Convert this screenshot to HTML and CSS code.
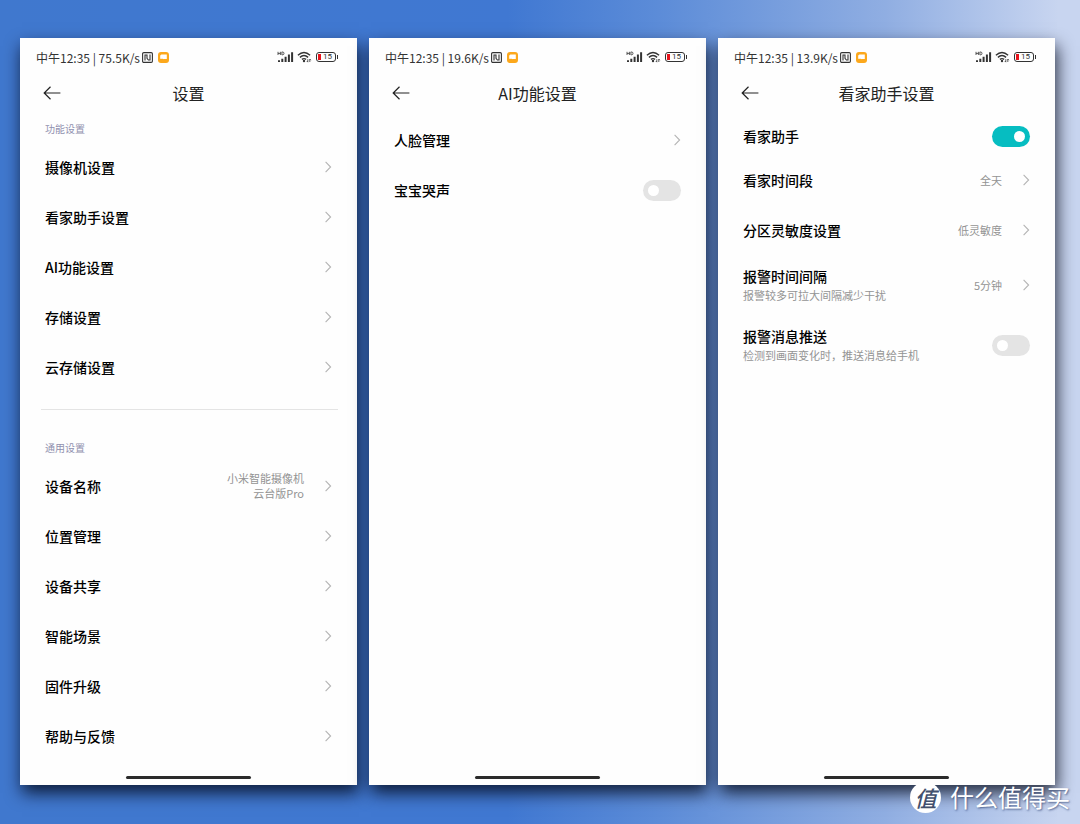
FILE: index.html
```html
<!DOCTYPE html>
<html lang="zh-CN">
<head>
<meta charset="utf-8">
<meta name="viewport" content="width=device-width, initial-scale=1">
<title>摄像机设置</title>
<link rel="stylesheet" href="styles.css">
</head>
<body>
<svg class="sprite" aria-hidden="true">
  <symbol id="chevron" viewBox="0 0 7 12"><path d="M.6.8 5.6 6 .6 11.2" fill="none" stroke="#b4b4b4" stroke-width="1.1"/></symbol>
  <symbol id="arrow" viewBox="0 0 18 14"><path d="M7.5.8 1.2 7l6.3 6.2M1.2 7H17.4" fill="none" stroke="#222" stroke-width="1.2"/></symbol>
  <symbol id="nfc" viewBox="0 0 11 11"><rect x=".6" y=".6" width="9.8" height="9.8" rx="1.2" fill="none" stroke="#333" stroke-width="1.1"/><path d="M3 8.6V3H5V6.4L6.4 8H8V2.4" fill="none" stroke="#333" stroke-width="1.1"/></symbol>
  <symbol id="app" viewBox="0 0 11 11"><rect width="11" height="11" rx="3" fill="#fca81c"/><path d="M3.4 2.4H8.8V7H5.4L3.8 8.6H2.2V3.6Z" fill="#fff"/><path d="M2 9V6.8H5V9Z" fill="#fca81c"/></symbol>
  <symbol id="signal" viewBox="0 0 17 12"><path d="M1 .8V4M3.4.8V4M1 2.4H3.4M4.9.9V3.9M4.9 1H5.6Q7 1 7 2.4T5.6 3.8H4.9" fill="none" stroke="#333" stroke-width=".8"/><path d="M1 9.2H3V11H1ZM4.3 7.8H6.3V11H4.3ZM7.6 5.8H9.6V11H7.6ZM10.9 3.4H12.9V11H10.9ZM14.1 1.2H16.1V11H14.1Z" fill="#333"/></symbol>
  <symbol id="wifi" viewBox="0 0 15 12"><path d="M.9 4.2Q7 -1.4 13.1 4.2M2.9 6.4Q7 2.8 11.1 6.4M4.9 8.4Q7 6.8 9.1 8.4" fill="none" stroke="#333" stroke-width="1.4"/><circle cx="7" cy="10" r="1.2" fill="#333"/><path d="M10.8 8.2V11M9.8 10 10.8 11.2M12.8 11V8M13.8 9.2 12.8 8" fill="none" stroke="#333" stroke-width=".8"/></symbol>
</svg>

<main class="board">
  <section class="phone">
    <div class="status">
      <span>中午12:35 | 75.5K/s</span>
      <svg class="nfc"><use href="#nfc"/></svg><svg class="app"><use href="#app"/></svg>
      <svg class="signal"><use href="#signal"/></svg><svg class="wifi"><use href="#wifi"/></svg><span class="battery">15</span>
    </div>
    <header class="bar">
      <button class="back" type="button" aria-label="返回"><svg><use href="#arrow"/></svg></button>
      <h1>设置</h1>
    </header>
    <h2 class="group">功能设置</h2>
    <nav class="list">
      <a class="row" href="#camera"><span class="label">摄像机设置</span><svg class="chevron"><use href="#chevron"/></svg></a>
      <a class="row" href="#guard"><span class="label">看家助手设置</span><svg class="chevron"><use href="#chevron"/></svg></a>
      <a class="row" href="#ai"><span class="label">AI功能设置</span><svg class="chevron"><use href="#chevron"/></svg></a>
      <a class="row" href="#storage"><span class="label">存储设置</span><svg class="chevron"><use href="#chevron"/></svg></a>
      <a class="row" href="#cloud"><span class="label">云存储设置</span><svg class="chevron"><use href="#chevron"/></svg></a>
    </nav>
    <hr class="divider">
    <h2 class="group">通用设置</h2>
    <nav class="list">
      <a class="row" href="#name"><span class="label">设备名称</span><span class="value">小米智能摄像机<br>云台版Pro</span><svg class="chevron"><use href="#chevron"/></svg></a>
      <a class="row" href="#place"><span class="label">位置管理</span><svg class="chevron"><use href="#chevron"/></svg></a>
      <a class="row" href="#share"><span class="label">设备共享</span><svg class="chevron"><use href="#chevron"/></svg></a>
      <a class="row" href="#scene"><span class="label">智能场景</span><svg class="chevron"><use href="#chevron"/></svg></a>
      <a class="row" href="#firmware"><span class="label">固件升级</span><svg class="chevron"><use href="#chevron"/></svg></a>
      <a class="row" href="#help"><span class="label">帮助与反馈</span><svg class="chevron"><use href="#chevron"/></svg></a>
    </nav>
    <div class="home"></div>
  </section>

  <section class="phone" id="ai">
    <div class="status">
      <span>中午12:35 | 19.6K/s</span>
      <svg class="nfc"><use href="#nfc"/></svg><svg class="app"><use href="#app"/></svg>
      <svg class="signal"><use href="#signal"/></svg><svg class="wifi"><use href="#wifi"/></svg><span class="battery">15</span>
    </div>
    <header class="bar">
      <button class="back" type="button" aria-label="返回"><svg><use href="#arrow"/></svg></button>
      <h1>AI功能设置</h1>
    </header>
    <div class="list list-ai">
      <a class="row" href="#faces"><span class="label">人脸管理</span><svg class="chevron"><use href="#chevron"/></svg></a>
      <div class="row"><label class="label" for="cry">宝宝哭声</label><input class="switch" id="cry" type="checkbox" role="switch"></div>
    </div>
    <div class="home"></div>
  </section>

  <section class="phone" id="guard">
    <div class="status">
      <span>中午12:35 | 13.9K/s</span>
      <svg class="nfc"><use href="#nfc"/></svg><svg class="app"><use href="#app"/></svg>
      <svg class="signal"><use href="#signal"/></svg><svg class="wifi"><use href="#wifi"/></svg><span class="battery">15</span>
    </div>
    <header class="bar">
      <button class="back" type="button" aria-label="返回"><svg><use href="#arrow"/></svg></button>
      <h1>看家助手设置</h1>
    </header>
    <div class="list list-guard">
      <div class="row row-short"><label class="label" for="assist">看家助手</label><input class="switch" id="assist" type="checkbox" role="switch" checked></div>
      <a class="row" href="#period"><span class="label">看家时间段</span><span class="value">全天</span><svg class="chevron"><use href="#chevron"/></svg></a>
      <a class="row" href="#zones"><span class="label">分区灵敏度设置</span><span class="value">低灵敏度</span><svg class="chevron"><use href="#chevron"/></svg></a>
      <a class="row row-tall" href="#interval"><span class="label">报警时间间隔<small>报警较多可拉大间隔减少干扰</small></span><span class="value">5分钟</span><svg class="chevron"><use href="#chevron"/></svg></a>
      <div class="row row-tall"><label class="label" for="push">报警消息推送<small>检测到画面变化时，推送消息给手机</small></label><input class="switch" id="push" type="checkbox" role="switch"></div>
    </div>
    <div class="home"></div>
  </section>
</main>

<div class="watermark"><span class="seal">值</span><span>什么值得买</span></div>
</body>
</html>
```
FILE: styles.css
```css
* { box-sizing: border-box; }

body {
  margin: 0;
  min-height: 100vh;
  display: flex;
  color: #000;
  font-family: "Noto Sans CJK SC", sans-serif;
  background: linear-gradient(90deg, #4078ce 0%, #4078d2 47%, #5c8cd8 61%, #90aee2 82%, #c8d5f0 98%);
}

.sprite { position: absolute; width: 0; height: 0; }

.board {
  flex: 1;
  display: grid;
  grid-template-columns: repeat(3, 1fr);
  gap: 12px;
  padding: 38px 25px 39px 20px;
}

.phone {
  display: flex;
  flex-direction: column;
  background: #fefefe;
  box-shadow: 2px 8px 16px rgba(0, 5, 20, .8);
}

.status {
  display: flex;
  align-items: center;
  height: 38px;
  padding: 0 21px 0 16px;
  color: #333;
  font-size: 12px;
  white-space: nowrap;
}
.status svg { flex: none; }
.nfc { width: 11px; height: 11px; margin-left: 2px; }
.app { width: 11px; height: 11px; margin-left: 5px; }
.signal { width: 17px; height: 12px; margin-left: auto; }
.wifi { width: 15px; height: 12px; margin-left: 3px; }

.battery {
  position: relative;
  width: 20px;
  height: 10px;
  margin-left: 4px;
  padding-left: 6px;
  border: 1px solid #333;
  border-radius: 3px;
  font: 8px/8px Roboto, sans-serif;
}
.battery::before,
.battery::after {
  content: "";
  position: absolute;
}
.battery::before { left: 1px; top: 1px; width: 3px; height: 6px; background: #e8141c; }
.battery::after { right: -3px; top: 2px; width: 1px; height: 4px; background: #333; }

.bar {
  display: grid;
  grid-template-columns: 18px 1fr 18px;
  align-items: center;
  height: 34px;
  padding: 0 23px;
}
.bar h1 {
  margin: 0;
  color: #222;
  font-size: 16px;
  font-weight: 400;
  line-height: 24px;
  text-align: center;
}
.back { padding: 0; border: 0; background: none; line-height: 0; }
.back svg { width: 18px; height: 14px; }

.group {
  margin: 10px 25px 4px;
  color: #9090ae;
  font-size: 10px;
  font-weight: 400;
  line-height: 18px;
}

.row {
  display: flex;
  align-items: center;
  min-height: 50px;
  padding: 0 25px;
  color: inherit;
  text-decoration: none;
}
.row-short { min-height: 38px; }
.row-tall { min-height: 60px; }
.list-ai { padding-top: 5px; }
.list-guard { padding-top: 7px; }

.label {
  flex: 1;
  font-size: 14px;
  font-weight: 500;
  line-height: 20px;
}
.label small {
  display: block;
  color: #949494;
  font-size: 11px;
  font-weight: 400;
  line-height: 18px;
}
.value {
  margin-right: 21px;
  color: #949494;
  font-size: 11px;
  line-height: 15px;
  text-align: right;
}
.chevron { flex: none; width: 7px; height: 12px; }

.switch {
  appearance: none;
  display: flex;
  align-items: center;
  width: 38px;
  height: 21px;
  margin: 0;
  padding: 0 5px;
  border-radius: 11px;
  background: #e4e4e4;
}
.switch::before {
  content: "";
  width: 11px;
  height: 11px;
  border-radius: 50%;
  background: #fff;
}
.switch:checked { justify-content: flex-end; background: #06bdc1; }

.divider {
  width: auto;
  margin: 17px 19px 19px 21px;
  border: 0;
  border-top: 1px solid #e4e4e4;
}

.home {
  align-self: center;
  width: 37%;
  height: 3px;
  margin: auto 0 6px;
  border-radius: 2px;
  background: #2b2b2b;
}

.watermark {
  position: absolute;
  right: 10px;
  bottom: 9px;
  display: flex;
  align-items: center;
  gap: 9px;
  color: #fff;
  font-size: 24px;
  line-height: 36px;
  text-shadow: 1px 1px 2px rgba(40, 60, 110, .7);
}
.seal {
  width: 31px;
  height: 31px;
  border-radius: 50%;
  background: #fff;
  color: #42506e;
  font-size: 22px;
  font-style: italic;
  font-weight: 500;
  line-height: 30px;
  text-align: center;
  text-shadow: none;
}
```
